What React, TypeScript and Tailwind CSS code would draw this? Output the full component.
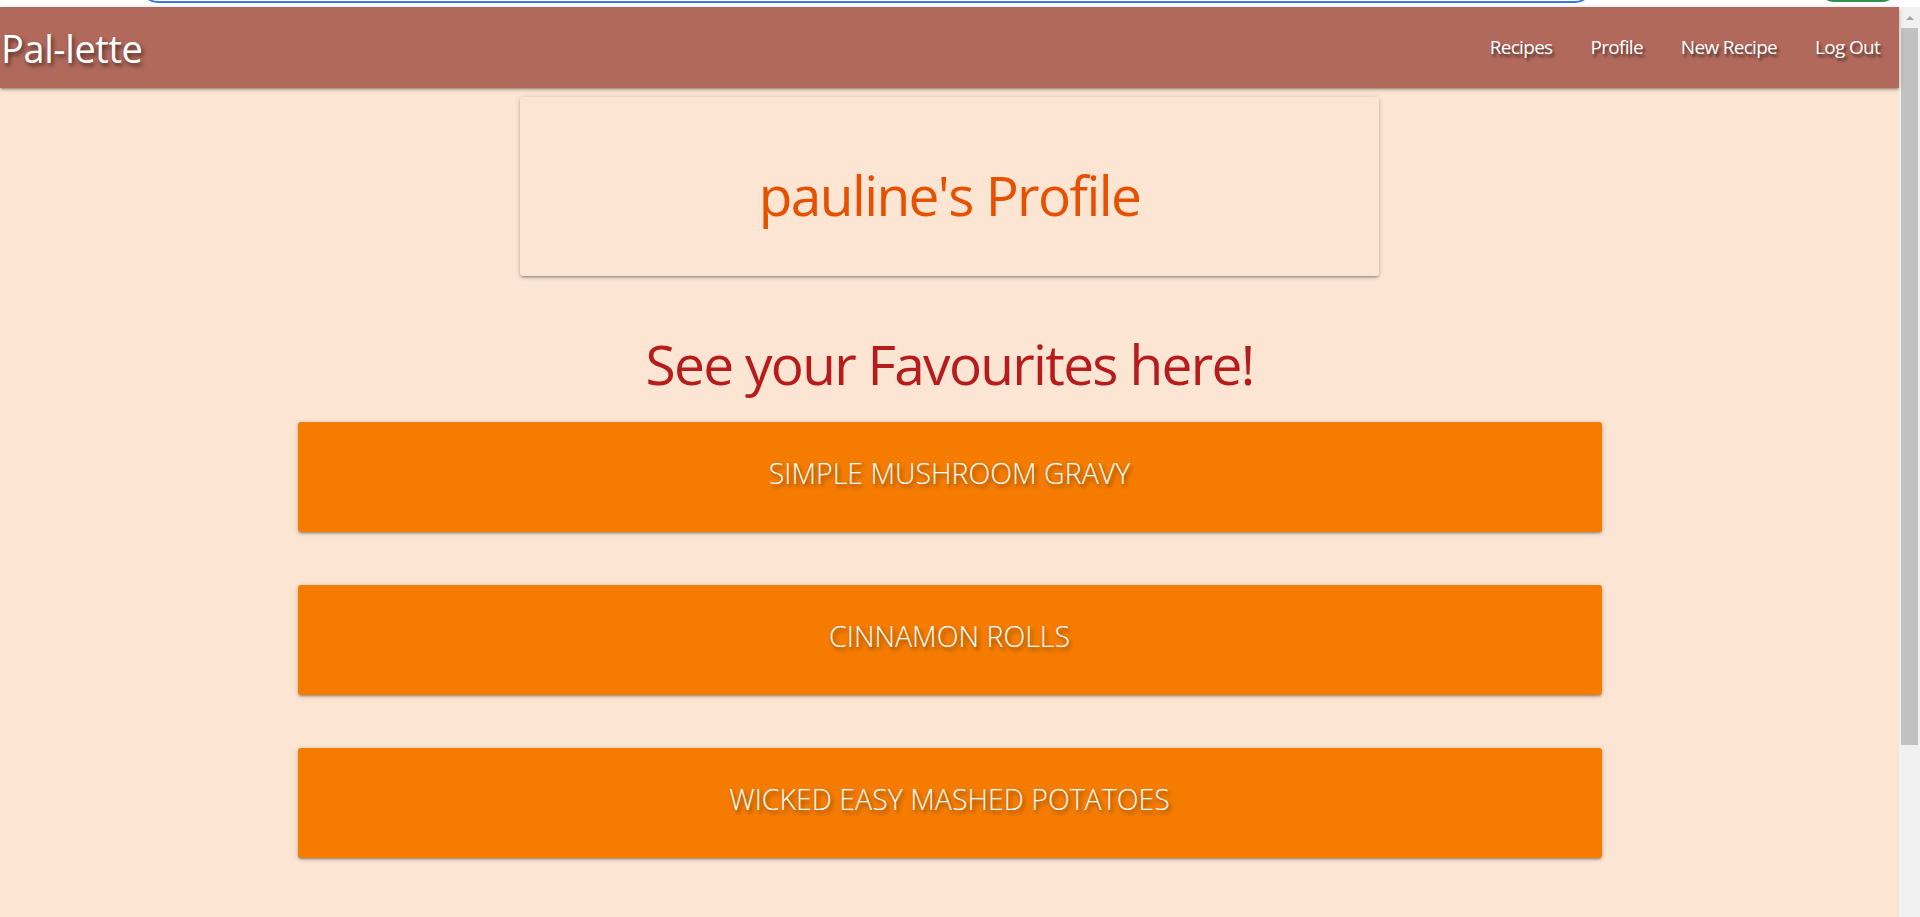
import React from 'react';

const NAV_LINKS = ['Recipes', 'Profile', 'New Recipe', 'Log Out'];

const FAVOURITES = ['Simple Mushroom Gravy', 'Cinnamon Rolls', 'Wicked Easy Mashed Potatoes'];

export default function App() {
    return (
        <div className="h-[917px] w-full overflow-hidden flex flex-col bg-white font-['Open_Sans','Noto_Sans',sans-serif]">
            {/* browser chrome remnant */}
            <div className="relative h-[7px] shrink-0 bg-white">
                <div className="absolute left-[141px] top-[-30px] w-[1451px] h-[33px] rounded-full border-2 border-[#3b78e7]" />
                <div className="absolute left-[1818px] top-[-30px] w-[80px] h-[32px] rounded-full bg-[#2f8f4e]" />
            </div>

            <div className="flex flex-1 min-h-0">
                {/* Page */}
                <div className="flex-1 flex flex-col bg-[#fce5d3]">
                    {/* Navbar */}
                    <nav className="h-[81px] shrink-0 flex items-center justify-between bg-[#b1695c] shadow-[0_2px_2px_0_rgba(0,0,0,0.14),0_3px_1px_-2px_rgba(0,0,0,0.12),0_1px_5px_0_rgba(0,0,0,0.2)] relative z-10">
                        <a className="pl-[1px] text-[38px] tracking-[-0.4px] leading-none text-white [text-shadow:2px_3px_4px_rgba(0,0,0,0.55)]">
                            Pal-lette
                        </a>
                        <ul className="flex items-center">
                            {NAV_LINKS.map((link) => (
                                <li key={link} className="px-[19px] text-[19px] tracking-[-0.7px] text-white [text-shadow:2px_3px_3px_rgba(0,0,0,0.55)]">
                                    {link}
                                </li>
                            ))}
                        </ul>
                    </nav>

                    {/* Profile card */}
                    <div className="mt-[9px] mx-auto w-[859px] h-[179px] shrink-0 rounded-[3px] bg-[#fce5d3] flex items-center justify-center pt-[16px] shadow-[0_2px_2px_0_rgba(0,0,0,0.14),0_3px_1px_-2px_rgba(0,0,0,0.12),0_1px_5px_0_rgba(0,0,0,0.2)]">
                        <h3 className="text-[55px] leading-none text-[#e65100] tracking-[-1.6px]">pauline's Profile</h3>
                    </div>

                    {/* Favourites */}
                    <h3 className="mt-[60px] text-center text-[55px] leading-none text-[#b71c1c] tracking-[-1.7px]">
                        See your Favourites here!
                    </h3>

                    <div className="mt-[31px] flex flex-col gap-[53px] items-center">
                        {FAVOURITES.map((recipe) => (
                            <div
                                key={recipe}
                                className="w-[1304px] h-[110px] rounded-[3px] bg-[#f57c00] flex items-center justify-center pb-[8px] shadow-[0_2px_2px_0_rgba(0,0,0,0.14),0_3px_1px_-2px_rgba(0,0,0,0.12),0_1px_5px_0_rgba(0,0,0,0.2)]"
                            >
                                <span className="text-[28.5px] font-light uppercase text-white [text-shadow:2px_3px_4px_rgba(0,0,0,0.45)]">
                                    {recipe}
                                </span>
                            </div>
                        ))}
                    </div>
                </div>

                {/* Scrollbar */}
                <div className="w-[21px] shrink-0 bg-[#f1f1f1] flex flex-col items-center">
                    <div className="h-[21px] flex items-center justify-center">
                        <div className="w-0 h-0 border-x-[4px] border-x-transparent border-b-[4px] border-b-[#a3a3a3]" />
                    </div>
                    <div className="w-[17px] h-[717px] bg-[#c1c1c1]" />
                </div>
            </div>
        </div>
    );
}
